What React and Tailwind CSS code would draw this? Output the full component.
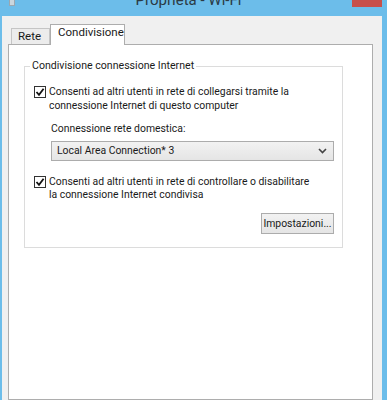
import React from 'react';

const font = { fontFamily: 'Roboto, "Liberation Sans", Arial, sans-serif' };

const CheckBox = () => (
  <div className="w-[12px] h-[12px] shrink-0 border border-[#333] bg-white flex items-center justify-center">
    <svg width="10" height="10" viewBox="0 0 10 10">
      <path d="M1.5 5 L4 7.8 L8.6 1.8" fill="none" stroke="#111" strokeWidth="1.8" />
    </svg>
  </div>
);

const Proprieta = () => {
  return (
    <div className="w-[387px] h-[400px] overflow-hidden bg-[#6cbdea] flex flex-col text-[10.4px] text-[#1a1a1a]" style={font}>
      {/* barra del titolo */}
      <div className="h-[16px] shrink-0 flex items-start">
        <div className="ml-[9px] w-[6px] h-[6px] border border-[#9aa7b0] border-t-0 bg-[#c9d6de]" />
        <div className="flex-1 text-center -mt-[9px] pl-[10px] text-[15px] leading-[18px] text-[#2b3a44] whitespace-nowrap">Proprietà - Wi-Fi</div>
        <div className="w-[30px] h-[7px] mr-[5px] bg-[#c7504b]" />
      </div>

      <div className="flex-1 ml-[2px] mr-[5px] bg-[#f0f0f0] pt-[8px] pl-[6px] pr-[9px] flex flex-col">
        {/* schede */}
        <div className="flex items-end pl-[3px] h-[20px]">
          <div className="h-[16px] w-[39px] border border-b-0 border-[#c5c5c5] bg-[#ececec] flex items-center pl-[6px] text-[11.5px]">Rete</div>
          <div className="h-[21px] w-[75px] -mb-px relative z-10 border border-b-0 border-[#adadad] bg-white flex items-center pl-[7px] text-[11.5px] pb-[4px]">Condivisione</div>
        </div>

        <div className="flex-1 border border-[#adadad] bg-white pt-[14px] pl-[15px] pr-[29px]">
          <fieldset className="border border-[#dcdcdc] h-[189px] pl-[9px] pr-[8px]">
            <legend className="-ml-[4px] px-[2px] text-[10.6px] leading-[14px]">Condivisione connessione Internet</legend>

            <div className="flex items-start gap-[3px] mt-[13px]">
              <CheckBox />
              <div className="leading-[14px] -mt-[1px] whitespace-nowrap">
                Consenti ad altri utenti in rete di collegarsi tramite la<br />
                connessione Internet di questo computer
              </div>
            </div>

            <div className="ml-[17px] mt-[9px] leading-[14px]">Connessione rete domestica:</div>
            <div className="ml-[17px] mt-[5px] h-[20px] border border-[#acacac] bg-gradient-to-b from-[#f2f2f2] to-[#e5e5e5] flex items-center justify-between pl-[5px] pr-[6px]">
              <span>Local Area Connection* 3</span>
              <svg width="9" height="6" viewBox="0 0 9 6">
                <path d="M1 1 L4.5 4.5 L8 1" fill="none" stroke="#444" strokeWidth="1.6" />
              </svg>
            </div>

            <div className="flex items-start gap-[3px] mt-[15px]">
              <CheckBox />
              <div className="leading-[13px] -mt-[1px] whitespace-nowrap">
                Consenti ad altri utenti in rete di controllare o disabilitare<br />
                la connessione Internet condivisa
              </div>
            </div>

            <div className="flex justify-end mt-[12px]">
              <div className="h-[21px] w-[73px] border border-[#acacac] bg-gradient-to-b from-[#f2f2f2] to-[#e5e5e5] flex items-center justify-center">
                Impostazioni...
              </div>
            </div>
          </fieldset>
        </div>
      </div>
    </div>
  );
};

export default Proprieta;
